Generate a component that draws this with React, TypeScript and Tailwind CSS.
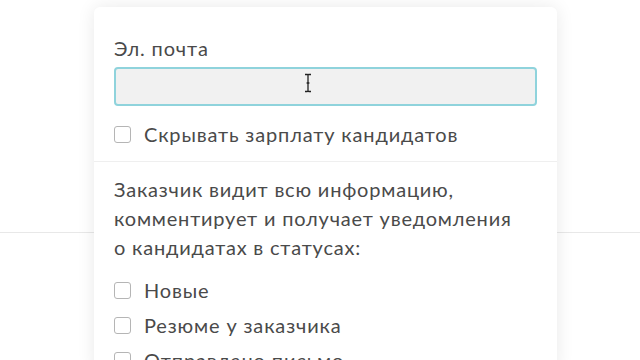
const font = { fontFamily: "Lato, 'Open Sans', sans-serif" };

function Box({ label }: { label: string }) {
  return (
    <label className="flex items-center gap-[13px] h-6 text-[20px] tracking-[0.85px] text-[#4a4a4a]">
      <span className="w-[17px] h-[17px] rounded-[3px] border border-[#b5b5b5] bg-white shrink-0" />
      <span>{label}</span>
    </label>
  );
}

export default function App() {
  return (
    <div className="relative h-[360px] w-[640px] overflow-hidden bg-white" style={font}>
      <div className="h-[233px] border-b border-[#e8e8e8]" />

      <div className="absolute left-[94px] top-[7px] w-[463px] rounded-md bg-white shadow-[0_0_18px_rgba(0,0,0,0.09)]">
        <div className="px-5 pt-[29px] pb-[15px] border-b border-[#efefef]">
          <p className="text-[20px] tracking-[0.85px] leading-6 text-[#4a4a4a]">Эл. почта</p>
          <div className="relative mt-[7px] h-[39px] rounded-[4px] border-2 border-[#8fd3dc] bg-[#f1f1f1]">
            <svg className="absolute left-[188px] top-[4px]" width="8" height="20" viewBox="0 0 8 20">
              <path d="M1 1.5h2.2c.5 0 .8.4.8.8M7 1.5H4.8c-.5 0-.8.4-.8.8v15.4c0 .4-.3.8-.8.8H1M7 18.5H4.8c-.5 0-.8-.4-.8-.8M2.6 10h2.8" fill="none" stroke="#222" strokeWidth="1.3" />
            </svg>
          </div>
          <div className="mt-4">
            <Box label="Скрывать зарплату кандидатов" />
          </div>
        </div>
        <div className="px-5 pt-[13px]">
          <p className="text-[20px] tracking-[0.8px] leading-[29px] text-[#4a4a4a]">
            Заказчик видит всю информацию,
            <br />
            комментирует и получает уведомления
            <br />о кандидатах в статусах:
          </p>
          <div className="mt-[16px] flex flex-col gap-[11px]">
            <Box label="Новые" />
            <Box label="Резюме у заказчика" />
            <Box label="Отправлено письмо" />
          </div>
        </div>
      </div>
    </div>
  );
}
